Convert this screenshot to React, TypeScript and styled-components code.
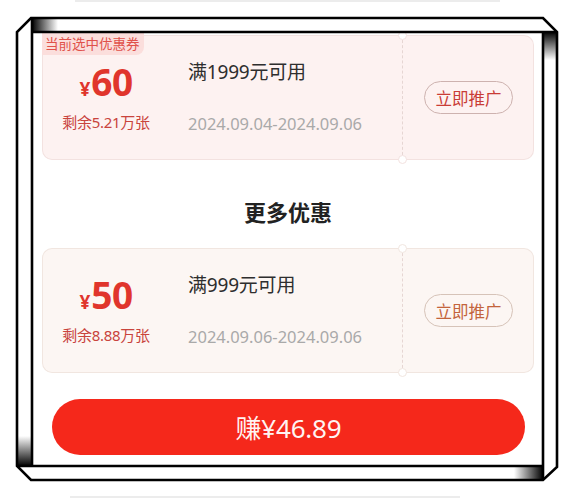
import React from "react";
import styled, { createGlobalStyle } from "styled-components";

const Global = createGlobalStyle`
  html, body { margin: 0; padding: 0; background: #ffffff; }
  body { font-family: "Noto Sans", "Noto Sans CJK SC", sans-serif; }
`;

const Stage = styled.div`
  position: relative;
  width: 575px;
  height: 500px;
  overflow: hidden;
  background: #ffffff;
`;

const Content = styled.div`
  display: flex;
  flex-direction: column;
  padding: 35px 41px 0 42px;
`;

const Card = styled.div<{ $tone: "pink" | "cream" }>`
  position: relative;
  display: flex;
  height: 125px;
  box-sizing: border-box;
  --bg: ${(p) => (p.$tone === "pink" ? "#fdf2f1" : "#fcf6f3")};
  --edge: ${(p) => (p.$tone === "pink" ? "#f3e2e0" : "#f1e6e0")};
`;

const Main = styled.div`
  position: relative;
  flex: 1;
  display: flex;
  align-items: stretch;
  background: var(--bg);
  border: 1px solid var(--edge);
  border-right: none;
  border-radius: 10px 0 0 10px;
`;

const Side = styled.div`
  position: relative;
  width: 132px;
  display: flex;
  align-items: center;
  justify-content: center;
  background: var(--bg);
  border: 1px solid var(--edge);
  border-left: 1px dashed #e6d6d3;
  border-radius: 0 10px 10px 0;
  box-sizing: border-box;

  &::before,
  &::after {
    content: "";
    position: absolute;
    left: -5px;
    width: 9px;
    height: 9px;
    border-radius: 50%;
    background: #ffffff;
    border: 1px solid var(--edge);
    box-sizing: border-box;
  }
  &::before { top: -5px; }
  &::after { bottom: -5px; }
`;

const Badge = styled.div`
  position: absolute;
  left: -1px;
  top: -3px;
  padding: 2px 4px 3px 3px;
  background: #fbdedc;
  color: #e0514a;
  font-size: 13.5px;
  line-height: 17px;
  font-family: "Noto Sans CJK SC", sans-serif;
  border-radius: 0 0 8px 0;
`;

const Amount = styled.div`
  width: 126px;
  display: flex;
  flex-direction: column;
  align-items: center;
  padding-top: 24px;
  box-sizing: border-box;
`;

const Price = styled.div`
  display: flex;
  align-items: baseline;
  color: #e0352c;
  height: 44px;
`;

const Yen = styled.span`
  font-family: "Noto Sans", sans-serif;
  font-size: 19px;
  font-weight: 700;
  margin-right: 1px;
`;

const Big = styled.span`
  font-family: "Noto Sans", sans-serif;
  font-size: 37px;
  font-weight: 700;
  line-height: 44px;
  letter-spacing: -0.5px;
`;

const Remain = styled.div`
  margin-top: 8px;
  color: #c9443d;
  font-size: 15px;
  line-height: 20px;
  font-family: "Noto Sans", "Noto Sans CJK SC", sans-serif;
  letter-spacing: -0.3px;
`;

const Info = styled.div`
  display: flex;
  flex-direction: column;
  padding: 23px 0 0 19px;
`;

const Cond = styled.div`
  color: #2e2e2e;
  font-size: 19px;
  line-height: 26px;
  font-family: "Noto Sans", "Noto Sans CJK SC", sans-serif;
  letter-spacing: -0.2px;
`;

const Dates = styled.div`
  margin-top: 28px;
  color: #a9a9a9;
  font-size: 16.5px;
  line-height: 22px;
  font-family: "Noto Sans", sans-serif;
`;

const Promote = styled.div<{ $tone: "pink" | "cream" }>`
  width: 89px;
  height: 33px;
  box-sizing: border-box;
  border-radius: 17px;
  border: 1px solid ${(p) => (p.$tone === "pink" ? "#cdb2af" : "#d6c3b8")};
  color: ${(p) => (p.$tone === "pink" ? "#c93c36" : "#c3643c")};
  font-size: 16.5px;
  font-family: "Noto Sans CJK SC", sans-serif;
  display: flex;
  align-items: center;
  justify-content: center;
  margin-left: 1px;
`;

const Heading = styled.div`
  margin: 37px 0 22px;
  text-align: center;
  font-size: 22px;
  line-height: 29px;
  font-weight: 700;
  color: #222222;
  font-family: "Noto Sans CJK SC", sans-serif;
`;

const Earn = styled.div`
  margin: 26px 9px 0 10px;
  height: 56px;
  border-radius: 28px;
  background: #f5281b;
  color: #fff4f2;
  display: flex;
  align-items: center;
  justify-content: center;
  font-size: 26px;
  font-family: "Noto Sans", "Noto Sans CJK SC", sans-serif;
  letter-spacing: -0.2px;
`;

const Frame = styled.svg`
  position: absolute;
  left: 0;
  top: 0;
  pointer-events: none;
`;

type Coupon = {
  tone: "pink" | "cream";
  value: string;
  remain: string;
  cond: string;
  dates: string;
  badge?: string;
};

const CouponCard = ({ c }: { c: Coupon }) => (
  <Card $tone={c.tone}>
    <Main>
      {c.badge && <Badge>{c.badge}</Badge>}
      <Amount>
        <Price>
          <Yen>¥</Yen>
          <Big>{c.value}</Big>
        </Price>
        <Remain>{c.remain}</Remain>
      </Amount>
      <Info>
        <Cond>{c.cond}</Cond>
        <Dates>{c.dates}</Dates>
      </Info>
    </Main>
    <Side>
      <Promote $tone={c.tone}>立即推广</Promote>
    </Side>
  </Card>
);

const FrameArt = () => (
  <Frame width="575" height="500" viewBox="0 0 575 500">
    <defs>
      <linearGradient id="gTop" x1="0" y1="0" x2="1" y2="0">
        <stop offset="0" stopColor="#000" />
        <stop offset="1" stopColor="#fff" />
      </linearGradient>
      <linearGradient id="gRight" x1="0" y1="0" x2="0" y2="1">
        <stop offset="0" stopColor="#000" />
        <stop offset="1" stopColor="#fff" />
      </linearGradient>
      <linearGradient id="gLeft" x1="0" y1="1" x2="0" y2="0">
        <stop offset="0" stopColor="#000" />
        <stop offset="1" stopColor="#fff" />
      </linearGradient>
      <linearGradient id="gBottom" x1="1" y1="0" x2="0" y2="0">
        <stop offset="0" stopColor="#000" />
        <stop offset="1" stopColor="#fff" />
      </linearGradient>
    </defs>
    <path
      d="M0,0 H575 V500 H0 Z M31,18 L543,18 L557,32 L557,467 L543,480 L31,480 L17,466 L17,32 Z"
      fill="#fff"
      fillRule="evenodd"
    />
    <line x1="75" y1="1" x2="500" y2="1" stroke="#ececec" strokeWidth="2" />
    <line x1="70" y1="497" x2="460" y2="497" stroke="#ececec" strokeWidth="2" />
    <path
      d="M31,18 L543,18 L557,32 L557,467 L543,480 L31,480 L17,466 L17,32 Z M32,32 H543 V466 H32 Z"
      fill="#fff"
      fillRule="evenodd"
    />
    <rect x="32" y="18" width="26" height="14" fill="url(#gTop)" />
    <rect x="543" y="32" width="14" height="28" fill="url(#gRight)" />
    <rect x="17" y="436" width="15" height="30" fill="url(#gLeft)" />
    <rect x="514" y="466" width="29" height="14" fill="url(#gBottom)" />
    <g stroke="#000" strokeWidth="2.6" fill="none" strokeLinejoin="miter">
      <path d="M31,18 L543,18 L557,32 L557,467 L543,480 L31,480 L17,466 L17,32 Z" />
      <line x1="32" y1="18" x2="32" y2="466" />
      <line x1="32" y1="32" x2="557" y2="32" />
      <line x1="543" y1="32" x2="543" y2="480" />
      <line x1="17" y1="466" x2="543" y2="466" />
    </g>
  </Frame>
);

const coupons: Coupon[] = [
  {
    tone: "pink",
    value: "60",
    remain: "剩余5.21万张",
    cond: "满1999元可用",
    dates: "2024.09.04-2024.09.06",
    badge: "当前选中优惠券",
  },
  {
    tone: "cream",
    value: "50",
    remain: "剩余8.88万张",
    cond: "满999元可用",
    dates: "2024.09.06-2024.09.06",
  },
];

export default function App() {
  return (
    <Stage>
      <Global />
      <Content>
        <CouponCard c={coupons[0]} />
        <Heading>更多优惠</Heading>
        <CouponCard c={coupons[1]} />
        <Earn>赚¥46.89</Earn>
      </Content>
      <FrameArt />
    </Stage>
  );
}
